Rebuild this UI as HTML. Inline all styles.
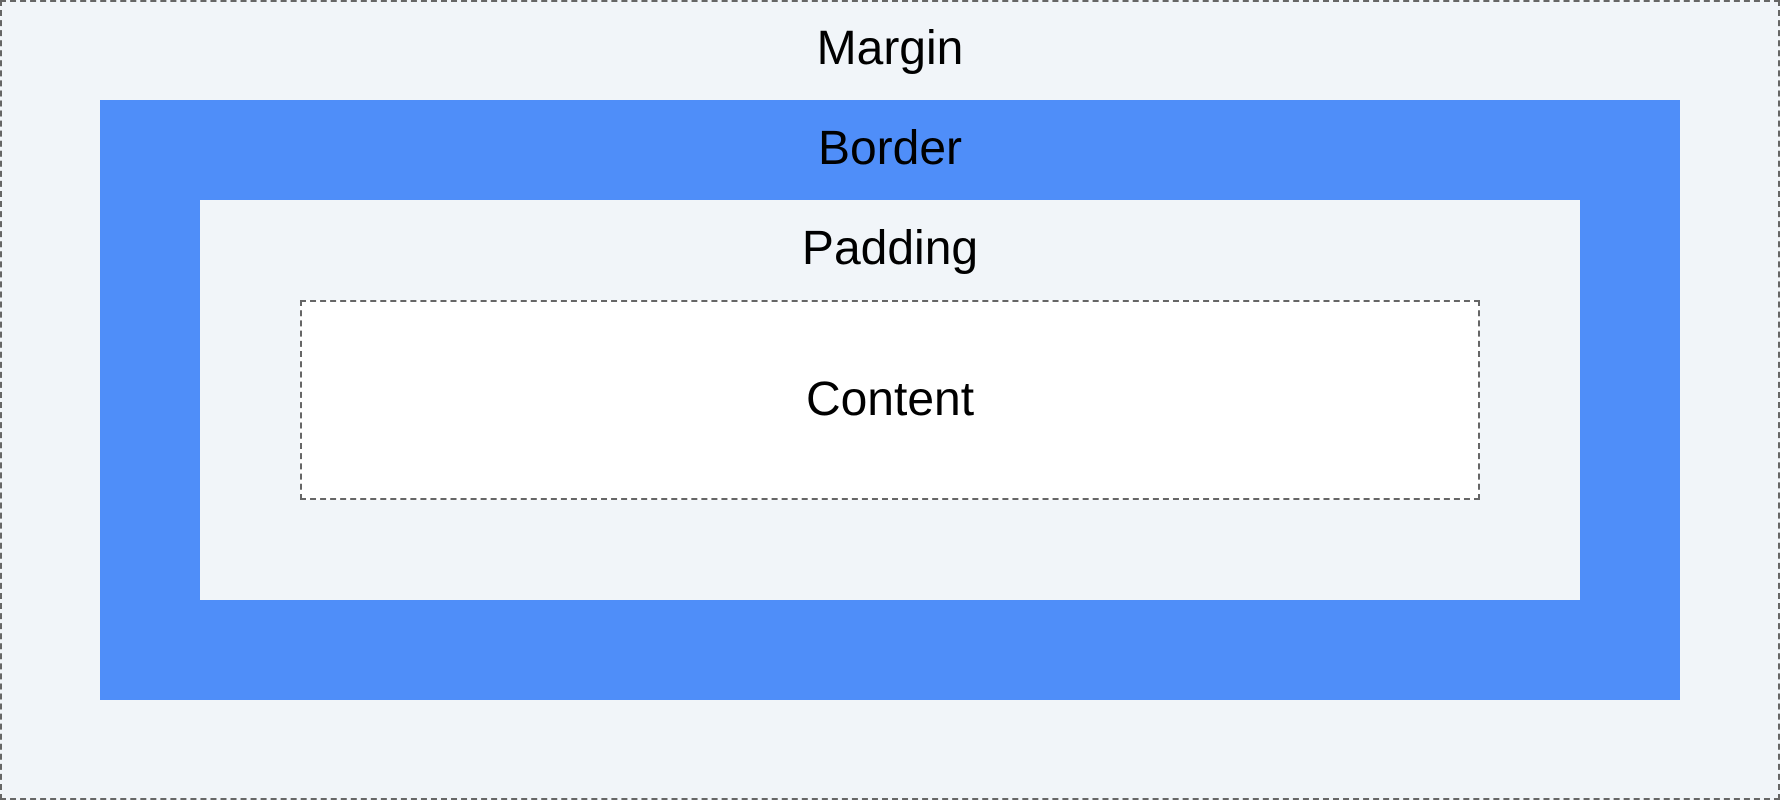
<!DOCTYPE html>
<html><head><style>
html,body{margin:0;padding:0;width:1780px;height:800px;overflow:hidden;background:#fff;}
body{font-family:"Liberation Sans",sans-serif;font-size:48px;color:#000;}
.box{position:absolute;box-sizing:border-box;}
.lbl{position:absolute;left:0;right:0;text-align:center;line-height:1;}
</style></head><body>
<div class="box" style="left:0;top:0;width:1780px;height:800px;background:#f1f5f9;border:2px dashed #666;"></div>
<div class="box" style="left:100px;top:100px;width:1580px;height:600px;background:#4f8ef9;"></div>
<div class="box" style="left:200px;top:200px;width:1380px;height:400px;background:#f1f5f9;"></div>
<div class="box" style="left:300px;top:300px;width:1180px;height:200px;background:#fff;border:2px dashed #666;"></div>
<div class="lbl" style="top:25px;">Margin</div>
<div class="lbl" style="top:125px;">Border</div>
<div class="lbl" style="top:225px;">Padding</div>
<div class="lbl" style="top:376px;">Content</div>
</body></html>
